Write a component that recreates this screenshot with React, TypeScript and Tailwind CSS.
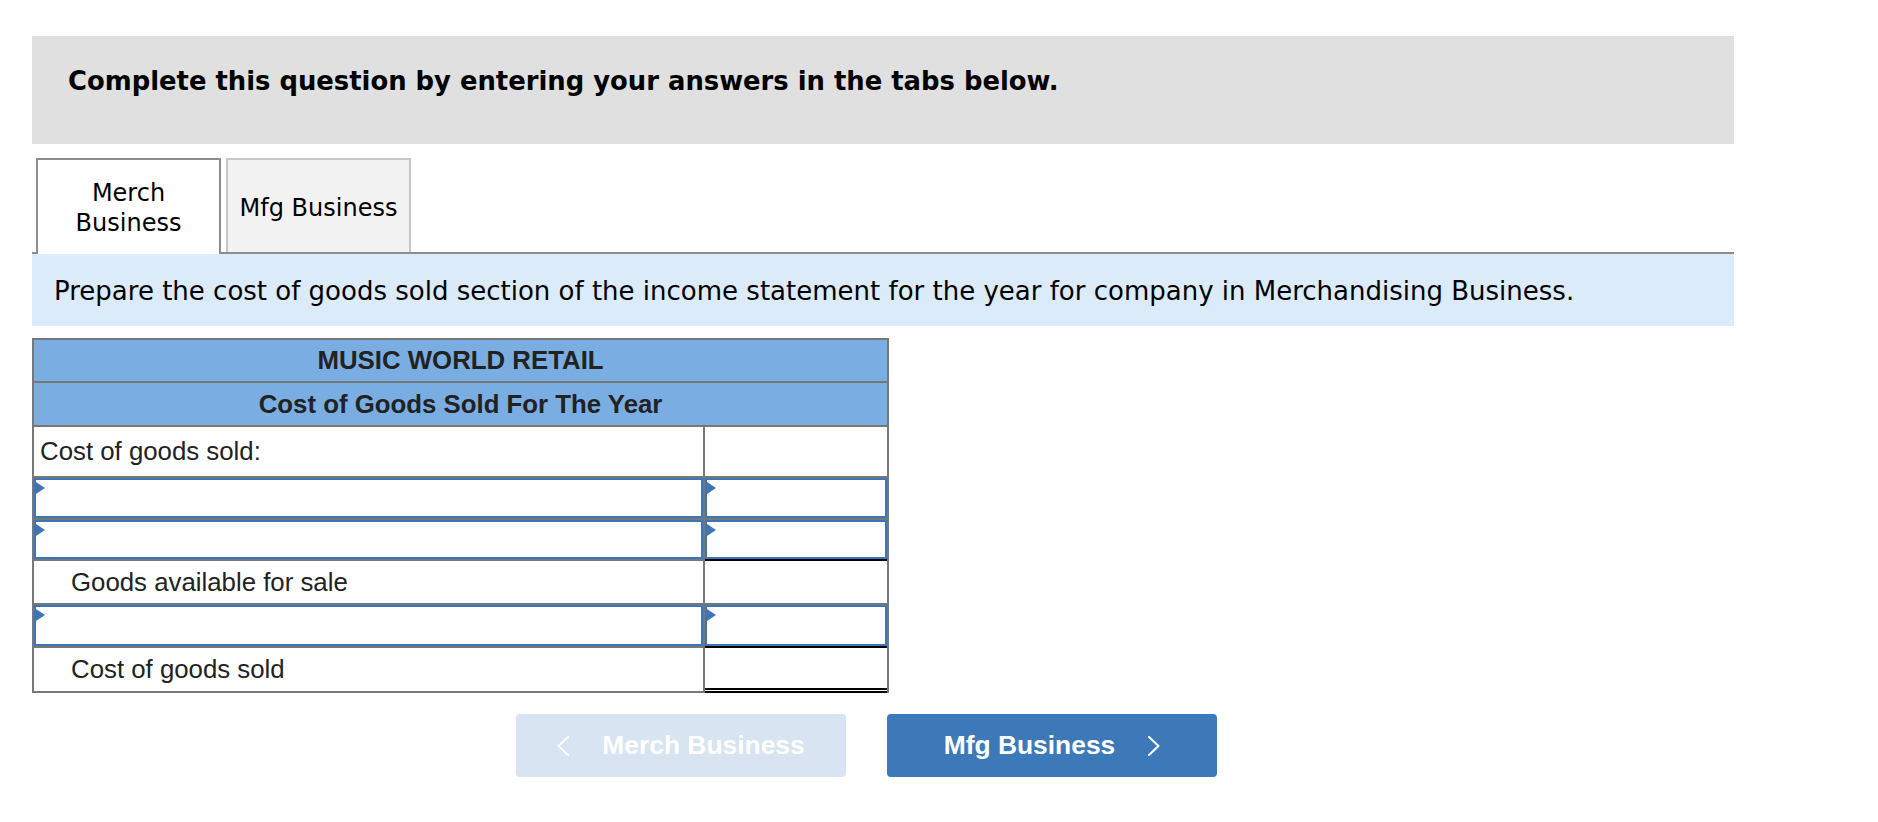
import React from "react";

const V = "font-[Verdana,'DejaVu_Sans',sans-serif]";
const A = "font-[Arial,'Liberation_Sans',sans-serif]";

function Flag() {
  return (
    <span className="absolute left-0 top-[2px] w-0 h-0 border-y-[6.5px] border-y-transparent border-l-[9px] border-l-[#3c76b7]" />
  );
}

function InputBox() {
  return (
    <div className="relative h-full w-full border-2 border-[#3c76b7] bg-white">
      <Flag />
    </div>
  );
}

function ChevronLeft() {
  return (
    <svg width="12" height="20" viewBox="0 0 12 20" fill="none">
      <polyline points="11,1 1.5,10 11,19" stroke="white" strokeWidth="2" strokeLinecap="round" strokeLinejoin="round" />
    </svg>
  );
}

function ChevronRight() {
  return (
    <svg width="12" height="20" viewBox="0 0 12 20" fill="none">
      <polyline points="1,1 10.5,10 1,19" stroke="white" strokeWidth="2" strokeLinecap="round" strokeLinejoin="round" />
    </svg>
  );
}

export default function App() {
  return (
    <div className="bg-white min-h-[822px] w-[1878px] pt-[36px] pl-[32px]">
      <div className="w-[1702px]">
        <div
          className={`h-[108px] bg-[#e0e0e0] pl-[36px] pt-[30px] text-[25.85px] leading-[30px] font-bold text-black ${V}`}
        >
          Complete this question by entering your answers in the tabs below.
        </div>

        <div className="mt-[14px] flex items-end gap-[5px] pl-[4px] border-b-2 border-[#8c8c8c]">
          <div
            className={`-mb-[2px] h-[96px] w-[185px] pt-[1px] border-2 border-b-0 border-[#8d8d8d] bg-white flex items-center justify-center text-center text-[24px] leading-[30px] text-black ${V}`}
          >
            Merch
            <br />
            Business
          </div>
          <div
            className={`h-[94px] w-[185px] pt-[4px] border-2 border-b-0 border-[#c6c6c6] bg-[#f2f2f2] flex items-center justify-center text-center text-[24px] leading-[30px] text-black ${V}`}
          >
            Mfg Business
          </div>
        </div>

        <div
          className={`h-[72px] bg-[#dcebf9] flex items-center pl-[22px] pt-[2px] text-[26px] leading-[30px] text-black ${V}`}
        >
          Prepare the cost of goods sold section of the income statement for the year for company in Merchandising Business.
        </div>

        <div className={`mt-[12px] w-[857px] border-x-2 border-t-2 border-[#777777] text-[#222222] text-[25.8px] ${A}`}>
          <div className="h-[43px] bg-[#7aaee2] border-b-2 border-[#777777] flex items-center justify-center font-bold">
            MUSIC WORLD RETAIL
          </div>
          <div className="h-[44px] bg-[#7aaee2] border-b-2 border-[#777777] flex items-center justify-center font-bold">
            Cost of Goods Sold For The Year
          </div>

          <div className="flex h-[51px]">
            <div className="w-[671px] border-r-2 border-b-2 border-[#777777] flex items-center pl-[6px]">
              Cost of goods sold:
            </div>
            <div className="flex-1 border-b-2 border-[#777777]" />
          </div>

          <div className="flex h-[42px]">
            <div className="w-[671px] border-r-2 border-b-2 border-[#777777]">
              <InputBox />
            </div>
            <div className="flex-1 border-b-2 border-[#777777]">
              <InputBox />
            </div>
          </div>

          <div className="flex h-[41px]">
            <div className="w-[671px] border-r-2 border-b-2 border-[#777777]">
              <InputBox />
            </div>
            <div className="flex-1 border-b-2 border-black">
              <InputBox />
            </div>
          </div>

          <div className="flex h-[44px]">
            <div className="w-[671px] border-r-2 border-b-2 border-[#777777] flex items-center pl-[37px]">
              Goods available for sale
            </div>
            <div className="flex-1 border-b-2 border-[#777777]" />
          </div>

          <div className="flex h-[43px]">
            <div className="w-[671px] border-r-2 border-b-2 border-[#777777]">
              <InputBox />
            </div>
            <div className="flex-1 border-b-2 border-black">
              <InputBox />
            </div>
          </div>

          <div className="flex h-[45px]">
            <div className="w-[671px] border-r-2 border-b-2 border-[#777777] flex items-center pl-[37px]">
              Cost of goods sold
            </div>
            <div className="flex-1 border-b-[5px] border-double border-black" />
          </div>
        </div>

        <div className="mt-[21px] ml-[484px] flex gap-[41px]">
          <button
            className={`w-[330px] h-[63px] rounded-[4px] bg-[#d8e4f1] flex items-center justify-center gap-[33px] text-white font-bold text-[26.4px] ${A}`}
          >
            <ChevronLeft />
            <span>Merch Business</span>
          </button>
          <button
            className={`w-[330px] h-[63px] rounded-[4px] bg-[#3d79b9] flex items-center justify-center gap-[33px] text-white font-bold text-[26.4px] ${A}`}
          >
            <span>Mfg Business</span>
            <ChevronRight />
          </button>
        </div>
      </div>
    </div>
  );
}
